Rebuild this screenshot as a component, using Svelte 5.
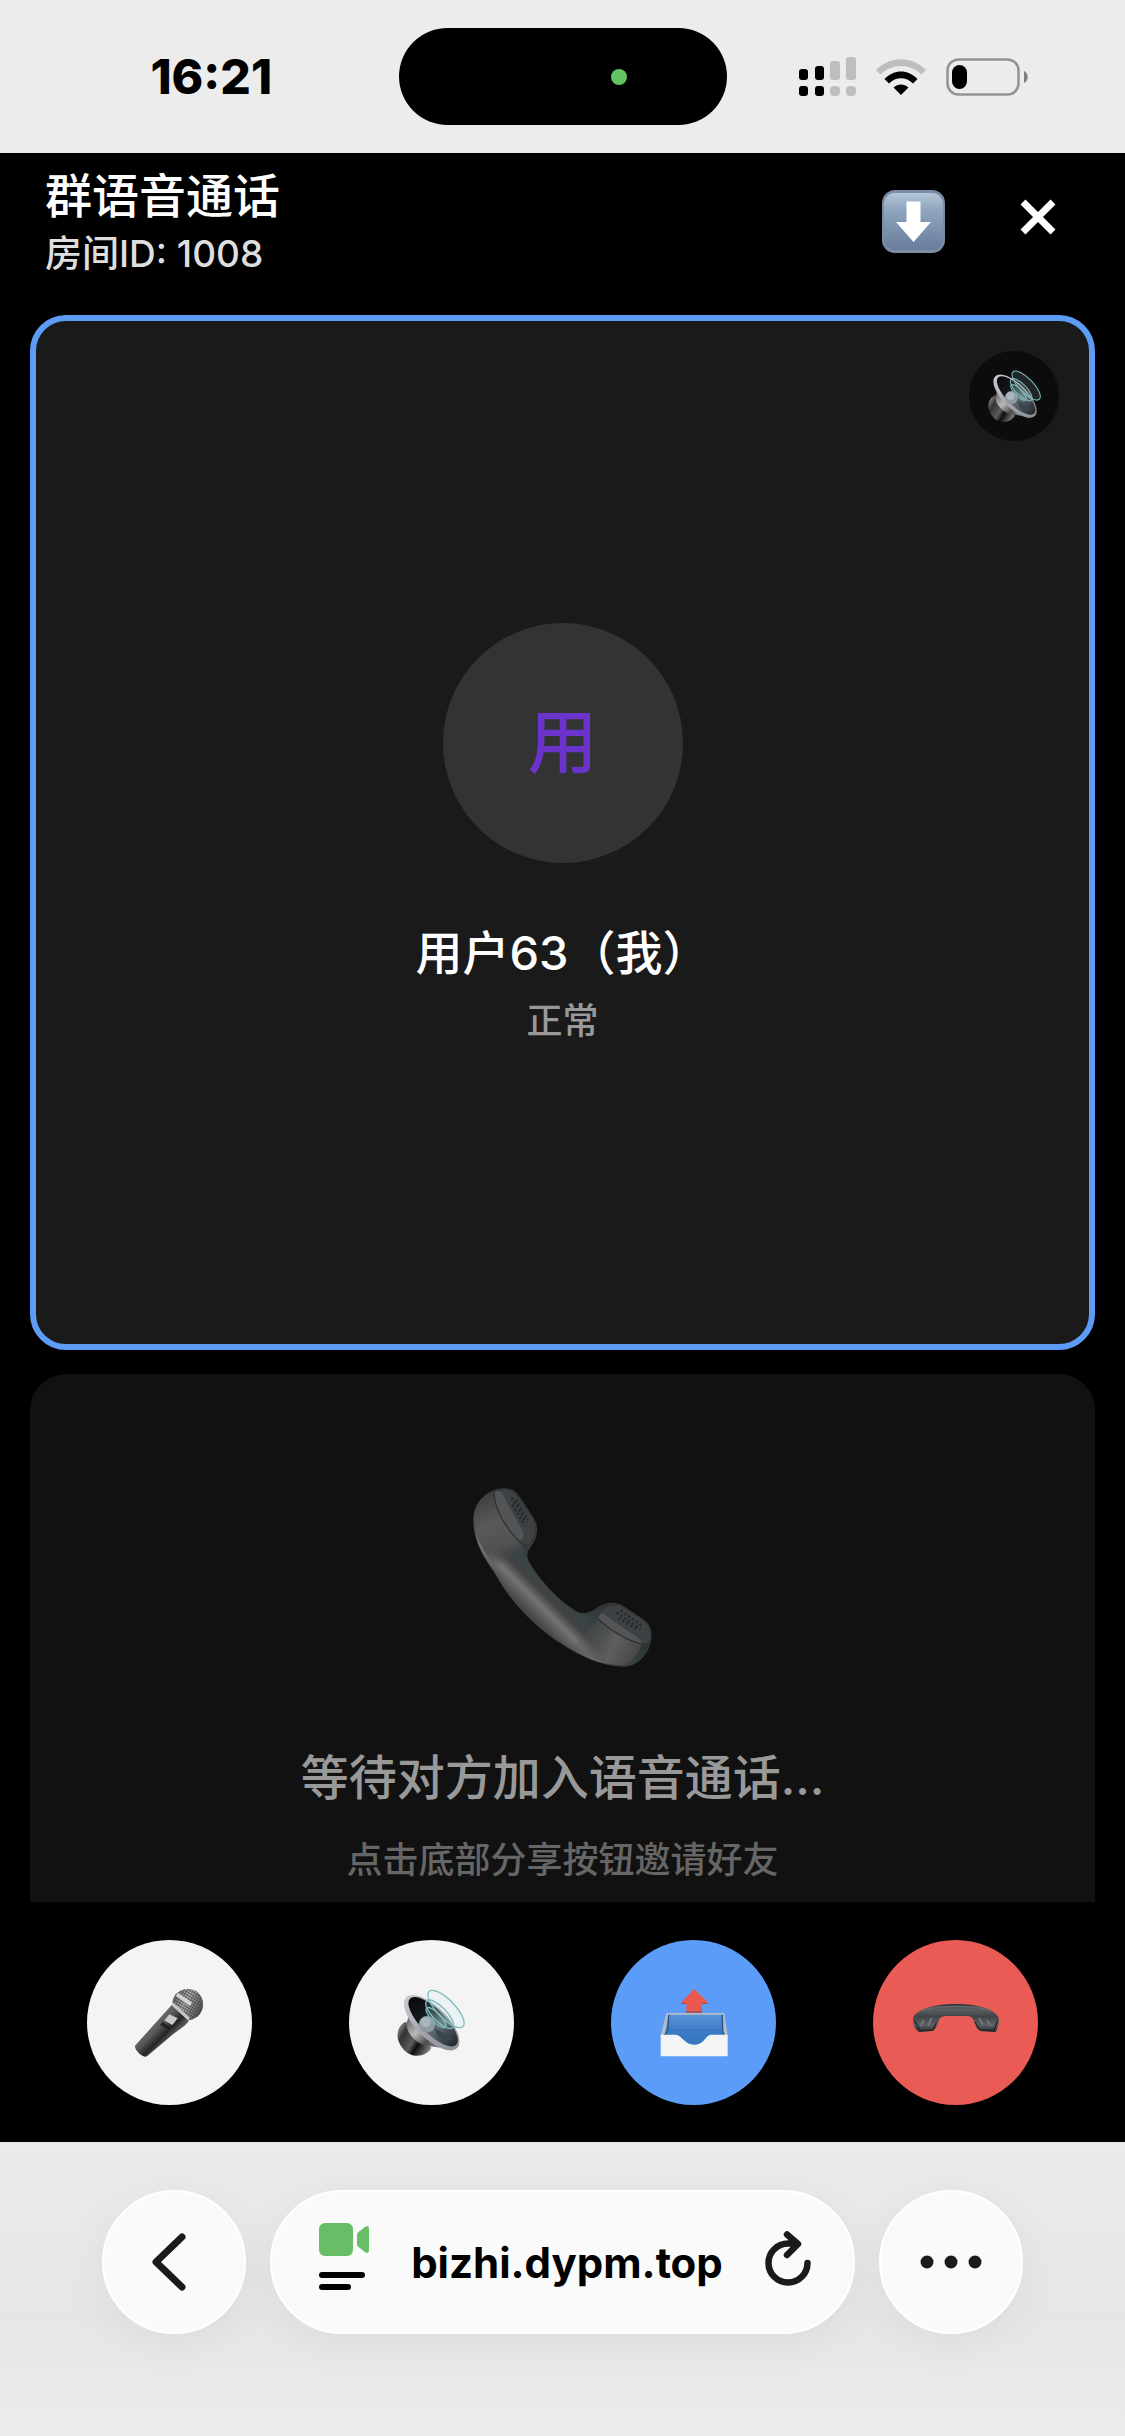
<script>
  let title = '群语音通话';
  let room = '房间ID: 1008';
  let user = { initial: '用', name: '用户63（我）', status: '正常' };
</script>

{#snippet speaker(id)}
  <svg class="speaker" viewBox="0 0 204 204" aria-hidden="true">
    <defs>
      <linearGradient id="{id}-mag" x1="0" y1="0.2" x2="1" y2="0.8">
        <stop offset="0" stop-color="#8b8b8b" />
        <stop offset="0.2" stop-color="#333" />
        <stop offset="0.5" stop-color="#5c5c5c" />
        <stop offset="0.65" stop-color="#0c0c0c" />
        <stop offset="1" stop-color="#888" />
      </linearGradient>
      <linearGradient id="{id}-neck" x1="0" y1="0" x2="1" y2="1">
        <stop offset="0" stop-color="#5a5a5c" />
        <stop offset="0.4" stop-color="#b9b9bb" />
        <stop offset="0.7" stop-color="#4c4c4e" />
        <stop offset="1" stop-color="#8a8a8c" />
      </linearGradient>
      <linearGradient id="{id}-rim" x1="0" y1="0" x2="1" y2="0">
        <stop offset="0" stop-color="#c9c8d0" />
        <stop offset="0.5" stop-color="#a5a5ad" />
        <stop offset="1" stop-color="#8d9096" />
      </linearGradient>
      <linearGradient id="{id}-cone" x1="0" y1="0" x2="1" y2="0">
        <stop offset="0" stop-color="#08090a" />
        <stop offset="0.35" stop-color="#15191c" />
        <stop offset="0.6" stop-color="#5d6a72" />
        <stop offset="1" stop-color="#20272c" />
      </linearGradient>
    </defs>
    <path d="M26 98 C8 106 0 124 2 146 C8 176 32 200 58 200 C80 200 96 190 103 176 Z" fill="url(#{id}-mag)" />
    <path d="M34 86 C26 104 28 120 38 134 C54 156 76 172 100 172 L130 176 L50 84 Z" fill="url(#{id}-neck)" />
    <g transform="rotate(45 104 101)">
      <ellipse cx="104" cy="101" rx="108" ry="47" fill="url(#{id}-rim)" />
      <ellipse cx="105" cy="96" rx="98" ry="37" fill="url(#{id}-cone)" />
    </g>
    <circle cx="90" cy="106" r="25" fill="#8d9aa3" />
    <circle cx="86" cy="100" r="15" fill="#a9b6be" />
    <path d="M112 118 L168 150 C160 158 140 152 124 142 Z" fill="#39444b" />
    <g fill="#b9e6e6" fill-opacity="0.12" stroke="#7fbcbc" stroke-width="4">
      <ellipse cx="147" cy="60" rx="73" ry="27" transform="rotate(46 147 60)" />
      <ellipse cx="128" cy="76" rx="56" ry="21" transform="rotate(46 128 76)" />
      <ellipse cx="117" cy="86" rx="40" ry="14" transform="rotate(46 117 86)" />
    </g>
  </svg>
{/snippet}

<div class="page">
  <div class="status">
    <div class="side left"><time>16:21</time></div>
    <div class="island"><i></i></div>
    <div class="side right">
      <svg width="57" height="39" viewBox="0 0 57 39" aria-label="信号">
        <g fill="#000">
          <rect x="0" y="12" width="9" height="11" rx="3" /><rect x="0" y="29" width="9" height="10" rx="3" />
          <rect x="16" y="9" width="9" height="14" rx="3" /><rect x="16" y="29" width="9" height="10" rx="3" />
        </g>
        <g fill="#bebebe">
          <rect x="31" y="4" width="10" height="19" rx="3" /><rect x="31" y="29" width="10" height="10" rx="4" />
          <rect x="47" y="0" width="10" height="23" rx="3" /><rect x="47" y="29" width="10" height="10" rx="4" />
        </g>
      </svg>
      <svg width="50" height="36" viewBox="0 0 50 36" aria-label="Wi-Fi">
        <path d="M0 11 C14 -3.500 36 -3.500 50 11 L45.500 15.500 C34 4 16 4 4.500 15.500 Z" fill="#bebebe" />
        <path d="M8.500 20 C18 10 32 10 41.500 20 L37 24.500 C30 17.500 20 17.500 13 24.500 Z" fill="#000" />
        <path d="M17.500 28.500 C22 24.500 28 24.500 32.500 28.500 L25 36 Z" fill="#000" />
      </svg>
      <svg width="82" height="38" viewBox="0 0 82 38" aria-label="电量">
        <rect x="1.500" y="1.500" width="71" height="35" rx="11" fill="none" stroke="#929292" stroke-width="2.500" />
        <rect x="6" y="7" width="15" height="24" rx="7.500" fill="#000" />
        <path d="M78 13 C83 15 83 23 78 25 Z" fill="#808080" />
      </svg>
    </div>
  </div>

  <header>
    <div class="heading">
      <h1>{title}</h1>
      <p>{room}</p>
    </div>
    <div class="actions">
      <button aria-label="最小化">
        <svg width="63" height="63" viewBox="0 0 63 63">
          <defs>
            <linearGradient id="dl" x1="0" y1="0" x2="0" y2="1">
              <stop offset="0" stop-color="#b3c5d8" />
              <stop offset="0.3" stop-color="#8fa4be" />
              <stop offset="1" stop-color="#687d9b" />
            </linearGradient>
          </defs>
          <rect width="63" height="63" rx="13" fill="#7b8da5" />
          <rect x="2" y="3" width="59" height="57" rx="11" fill="url(#dl)" />
          <path d="M24.500 11.500 H38.500 V32 H49 L31.500 52 L14 32 H24.500 Z" fill="#fff" />
        </svg>
      </button>
      <button class="close" aria-label="关闭">
        <svg width="36" height="36" viewBox="0 0 36 36">
          <path d="M3 3 L33 33 M33 3 L3 33" stroke="#fff" stroke-width="7" />
        </svg>
      </button>
    </div>
  </header>

  <main>
    <section class="card me">
      <button class="badge" aria-label="扬声器">{@render speaker('sa')}</button>
      <div class="avatar">{user.initial}</div>
      <h2>{user.name}</h2>
      <p class="state">{user.status}</p>
    </section>

    <section class="card waiting">
      <svg class="handset" viewBox="96 83 538 539" aria-hidden="true">
        <defs>
          <linearGradient id="hs" gradientUnits="userSpaceOnUse" x1="225" y1="470" x2="370" y2="325">
            <stop offset="0" stop-color="#38383a" />
            <stop offset="0.18" stop-color="#4a4a4b" />
            <stop offset="0.37" stop-color="#747475" />
            <stop offset="0.52" stop-color="#424344" />
            <stop offset="0.7" stop-color="#374343" />
            <stop offset="1" stop-color="#2e3434" />
          </linearGradient>
          <linearGradient id="ear" gradientUnits="userSpaceOnUse" x1="130" y1="110" x2="200" y2="310">
            <stop offset="0" stop-color="#414144" />
            <stop offset="0.4" stop-color="#59595b" />
            <stop offset="0.75" stop-color="#515152" />
            <stop offset="1" stop-color="#404142" stop-opacity="0" />
          </linearGradient>
          <linearGradient id="mouth" gradientUnits="userSpaceOnUse" x1="600" y1="590" x2="400" y2="500">
            <stop offset="0" stop-color="#444445" />
            <stop offset="0.4" stop-color="#5e5e5f" />
            <stop offset="1" stop-color="#4a4a4a" stop-opacity="0" />
          </linearGradient>
        </defs>
        <path d="M97 180 C97 125 140 84 192 85 C218 86 226 97 238 114 L276 172 C290 194 290 218 279 243 L262 270 C252 290 262 306 276 326 C310 376 352 420 404 454 C424 466 440 462 462 450 C490 428 520 424 548 440 L606 478 C628 492 634 514 631 536 C626 580 596 618 548 620 C480 618 424 590 372 558 C290 508 210 430 160 336 C124 288 98 240 97 180 Z" fill="url(#hs)" stroke="#454647" stroke-width="2" />
        <path d="M99 180 C99 128 135 98 158 96 C162 140 192 200 238 248 L252 276 C230 290 204 308 186 340 C150 310 99 240 99 180 Z" fill="url(#ear)" />
        <path d="M470 476 C510 510 560 548 604 552 C588 594 566 614 540 617 C490 612 432 590 390 560 C420 540 450 510 470 476 Z" fill="url(#mouth)" />
        <path d="M160 97 C184 84 210 84 228 106 L272 172 C290 200 284 222 270 246 C262 258 246 250 236 240 C196 200 164 150 160 97 Z" fill="#3e4143" />
        <path d="M160 97 C168 90 178 90 184 100 L246 214 C250 230 246 242 236 242 C196 200 164 150 160 97 Z" fill="#535456" />
        <path d="M158 100 C162 150 194 206 240 250" fill="none" stroke="#28292a" stroke-width="3" />
        <path d="M472 474 C490 434 524 428 548 442 L604 480 C626 494 634 520 628 540 C622 554 610 554 600 550 C550 536 508 508 472 474 Z" fill="#3e4143" />
        <path d="M472 474 C476 462 484 458 494 466 L586 530 C600 538 604 546 600 552 C550 536 508 508 472 474 Z" fill="#535456" />
        <path d="M470 476 C508 512 556 540 602 553" fill="none" stroke="#28292a" stroke-width="3" />
        <g fill="none" stroke="#262a2b" stroke-width="7" stroke-dasharray="7 7">
          <path d="M212 112 L256 186" /><path d="M224 118 L262 180" /><path d="M214 134 L250 192" />
          <path d="M528 458 L600 508" /><path d="M540 452 L604 498" /><path d="M534 474 L586 508" />
        </g>
      </svg>
      <p class="wait">等待对方加入语音通话...</p>
      <p class="hint">点击底部分享按钮邀请好友</p>
    </section>
  </main>

  <footer>
    <button class="ctl" aria-label="麦克风">
      <svg width="68" height="68" viewBox="0 0 204 204">
        <defs>
          <linearGradient id="mb" gradientUnits="userSpaceOnUse" x1="50" y1="100" x2="100" y2="150">
            <stop offset="0" stop-color="#6f6f6f" />
            <stop offset="0.4" stop-color="#555" />
            <stop offset="0.75" stop-color="#242424" />
            <stop offset="1" stop-color="#555" />
          </linearGradient>
          <linearGradient id="mh" gradientUnits="userSpaceOnUse" x1="120" y1="30" x2="200" y2="70">
            <stop offset="0" stop-color="#777" />
            <stop offset="0.35" stop-color="#b5b5b5" />
            <stop offset="1" stop-color="#4e4e4e" />
          </linearGradient>
          <pattern id="mesh" width="8" height="8" patternUnits="userSpaceOnUse" patternTransform="rotate(30)">
            <path d="M0 0 H8 M0 0 V8" stroke="#333" stroke-width="3" />
          </pattern>
        </defs>
        <path d="M110 48 L162 96 C150 112 130 124 116 134 L36 202 C26 208 -2 186 0 170 Z" fill="url(#mb)" />
        <path d="M112 40 C116 14 136 0 160 0 C186 0 204 20 204 46 C204 70 188 90 162 94 Z" fill="url(#mh)" />
        <path d="M112 40 C116 14 136 0 160 0 C186 0 204 20 204 46 C204 70 188 90 162 94 Z" fill="url(#mesh)" />
        <path d="M112 44 L162 90" stroke="#c4c4c4" stroke-width="9" />
        <path d="M126 16 L168 46" stroke="#d4d4d4" stroke-width="12" />
        <path d="M103 76 L128 88 L112 108 L88 94 Z" fill="#c9c9c9" />
        <path d="M82 98 L106 114 L102 124 L76 108 Z" fill="#222" />
      </svg>
    </button>
    <button class="ctl" aria-label="扬声器">{@render speaker('sb')}</button>
    <button class="ctl share" aria-label="分享">
      <svg width="68" height="68" viewBox="0 0 204 204">
        <defs>
          <linearGradient id="tr" x1="0" y1="0" x2="0" y2="1">
            <stop offset="0" stop-color="#5a92d8" />
            <stop offset="0.5" stop-color="#3d7cc6" />
            <stop offset="1" stop-color="#3576bd" />
          </linearGradient>
        </defs>
        <path d="M103 0 L143 40 V44 H126 V70 H79 V44 H64 V40 Z" fill="#e9594f" />
        <path d="M79 67 H126 V71 H79 Z M64 42 H79 V45 H64 Z M126 42 H143 V45 H126 Z" fill="#a8474f" />
        <path d="M19 72 H193 L203 140 H2 Z" fill="#b4bcc4" />
        <path d="M26 77 H187 L190 138 L170 172 H40 L14 138 Z" fill="url(#tr)" />
        <path d="M26 77 L24 124 L14 138 M187 77 L188 124 L192 138" fill="none" stroke="#28568c" stroke-width="4" />
        <path d="M22 124 H190" stroke="#316bae" stroke-width="2" />
        <path d="M2 137 H46 C66 137 72 167 103 167 C134 167 136 137 154 137 H203 V198 Q203 202 199 202 H6 Q2 202 2 198 Z" fill="#f4f4f5" />
      </svg>
    </button>
    <button class="ctl hang" aria-label="挂断">
      <svg width="86" height="38" viewBox="0 0 258 114">
        <defs>
          <linearGradient id="hg" x1="0" y1="0" x2="0" y2="1">
            <stop offset="0" stop-color="#2e3133" />
            <stop offset="0.2" stop-color="#5b5e60" />
            <stop offset="0.45" stop-color="#3f4446" />
            <stop offset="0.75" stop-color="#5d6163" />
            <stop offset="1" stop-color="#282b2c" />
          </linearGradient>
        </defs>
        <path d="M0 46 C2 18 60 0 129 0 C198 0 254 18 258 46 C258 62 254 76 248 84 L206 82 C192 78 186 66 182 48 C176 36 166 36 154 36 L104 36 C90 36 82 38 78 48 C74 64 68 76 58 81 L18 84 C4 76 0 62 0 46 Z" fill="url(#hg)" />
        <path d="M30 18 C80 4 180 4 228 18" fill="none" stroke="#66696b" stroke-width="5" />
        <path d="M4 50 L22 80 L60 78 L70 56 M254 50 L242 80 L200 76 L186 54" fill="none" stroke="#25282a" stroke-width="4" />
        <path d="M24 66 L32 48 M46 64 L56 42 M234 66 L222 48 M210 62 L198 42" stroke="#818486" stroke-width="4" />
      </svg>
    </button>
  </footer>

  <nav>
    <button class="round" aria-label="返回">
      <svg width="44" height="58" viewBox="0 0 44 58">
        <path d="M30 4 L4 29 L30 54" fill="none" stroke="#1a1a1a" stroke-width="7" stroke-linecap="round" stroke-linejoin="round" />
      </svg>
    </button>
    <div class="address">
      <svg width="50" height="79" viewBox="0 0 50 79" aria-hidden="true">
        <rect width="34" height="33" rx="6" fill="#68bd67" />
        <path d="M38 12 Q38 10 39.500 9 L46 4 Q50 1.500 50 6 V27 Q50 31.500 46 29 L39.500 24 Q38 23 38 21 Z" fill="#68bd67" />
        <path d="M3 52 H43 M3 64 H29" stroke="#000" stroke-width="6" stroke-linecap="round" />
      </svg>
      <a href="#bizhi">bizhi.dypm.top</a>
      <button aria-label="刷新">
        <svg width="46" height="62" viewBox="0 0 46 62">
          <path d="M42.500 32 A19.500 19.500 0 1 1 23 12.500 H32 M22 3.500 L33 13 L22 24" fill="none" stroke="#1a1a1a" stroke-width="6.500" stroke-linecap="round" stroke-linejoin="round" />
        </svg>
      </button>
    </div>
    <button class="round" aria-label="更多">
      <svg width="62" height="14" viewBox="0 0 62 14">
        <circle cx="7" cy="7" r="6.500" fill="#1a1a1a" /><circle cx="31" cy="7" r="6.500" fill="#1a1a1a" /><circle cx="55" cy="7" r="6.500" fill="#1a1a1a" />
      </svg>
    </button>
  </nav>
</div>

<style>
  :global(body) {
    background: #000;
  }
  .page {
    display: flex;
    flex-direction: column;
    height: 100vh;
    overflow: hidden;
    font-family: Inter, 'Noto Sans CJK SC', sans-serif;
    font-weight: 500;
    color: #fff;
  }
  h1, h2, p {
    margin: 0;
  }
  svg {
    display: block;
    flex: none;
  }
  button {
    display: flex;
    align-items: center;
    justify-content: center;
    padding: 0;
    border: 0;
    background: none;
    flex: none;
  }

  .status {
    display: flex;
    align-items: center;
    flex: none;
    height: 153px;
    background: #ececec;
    color: #000;
  }
  .side {
    display: flex;
    flex: 1;
    align-items: center;
    justify-content: center;
  }
  .left {
    padding-left: 24px;
  }
  .right {
    gap: 20px;
    padding-right: 24px;
  }
  time {
    font-size: 48px;
    font-weight: 800;
  }
  .island {
    display: flex;
    align-items: center;
    justify-content: flex-end;
    width: 328px;
    height: 97px;
    padding-right: 100px;
    box-sizing: border-box;
    border-radius: 49px;
    background: #000;
  }
  .island i {
    width: 16px;
    height: 16px;
    border-radius: 50%;
    background: #63c466;
  }

  header {
    display: flex;
    justify-content: space-between;
    flex: none;
    padding: 13px 42px 33px 45px;
  }
  h1 {
    font-size: 47px;
    font-weight: 500;
    line-height: 60px;
  }
  .heading p {
    font-size: 37px;
    line-height: 56px;
    color: #dedede;
  }
  .actions {
    display: flex;
    gap: 35px;
  }
  .actions button {
    width: 90px;
    height: 110px;
  }
  .actions .close {
    padding-bottom: 8px;
  }

  main {
    display: flex;
    flex-direction: column;
    gap: 24px;
    flex: 1;
    min-height: 0;
    overflow: hidden;
    padding: 0 30px;
  }
  .card {
    position: relative;
    display: flex;
    flex-direction: column;
    align-items: center;
    flex: none;
    min-height: 1035px;
    box-sizing: border-box;
    border-radius: 36px;
  }
  .me {
    justify-content: center;
    border: 6px solid #5c9cf5;
    background: #1a1a1a;
  }
  .badge {
    position: absolute;
    top: 30px;
    right: 30px;
    width: 90px;
    height: 90px;
    border-radius: 50%;
    background: #0c0c0d;
  }
  .speaker {
    width: 68px;
    height: 68px;
  }
  .badge .speaker {
    width: 53px;
    height: 53px;
  }
  .avatar {
    display: flex;
    align-items: center;
    justify-content: center;
    width: 240px;
    height: 240px;
    padding-bottom: 12px;
    box-sizing: border-box;
    border-radius: 50%;
    background: #333;
    color: #6a34cc;
    font-size: 70px;
  }
  h2 {
    margin-top: 58px;
    font-size: 47px;
    font-weight: 500;
    line-height: 64px;
  }
  .state {
    margin-top: 15px;
    font-size: 36px;
    line-height: 42px;
    color: #999;
  }
  .waiting {
    padding-top: 114px;
    background: #111;
  }
  .handset {
    width: 179px;
    height: 179px;
  }
  .wait {
    margin-top: 79px;
    font-size: 48px;
    line-height: 64px;
    color: #999;
  }
  .hint {
    margin-top: 29px;
    font-size: 36px;
    line-height: 42px;
    color: #666;
  }

  footer {
    display: flex;
    justify-content: space-around;
    flex: none;
    padding: 38px 38px 37px;
  }
  .ctl {
    width: 165px;
    height: 165px;
    border-radius: 50%;
    background: #f4f4f5;
  }
  .share {
    background: #5a9cf8;
  }
  .hang {
    background: #e95b54;
  }

  nav {
    display: flex;
    gap: 24px;
    flex: none;
    padding: 48px 102px 102px;
    background: linear-gradient(#ebebeb, #e6e6e6 60%, #ececec);
  }
  .round,
  .address {
    height: 144px;
    box-sizing: border-box;
    border: 2px solid #fff;
    border-radius: 72px;
    background: #fafafa;
    box-shadow: 0 8px 48px rgba(0, 0, 0, 0.05);
  }
  .round {
    width: 144px;
  }
  .address {
    display: flex;
    align-items: center;
    justify-content: space-between;
    flex: 1;
    padding: 0 42px 0 47px;
  }
  a {
    color: #000;
    font-size: 42px;
    font-weight: 700;
    text-decoration: none;
  }
</style>
